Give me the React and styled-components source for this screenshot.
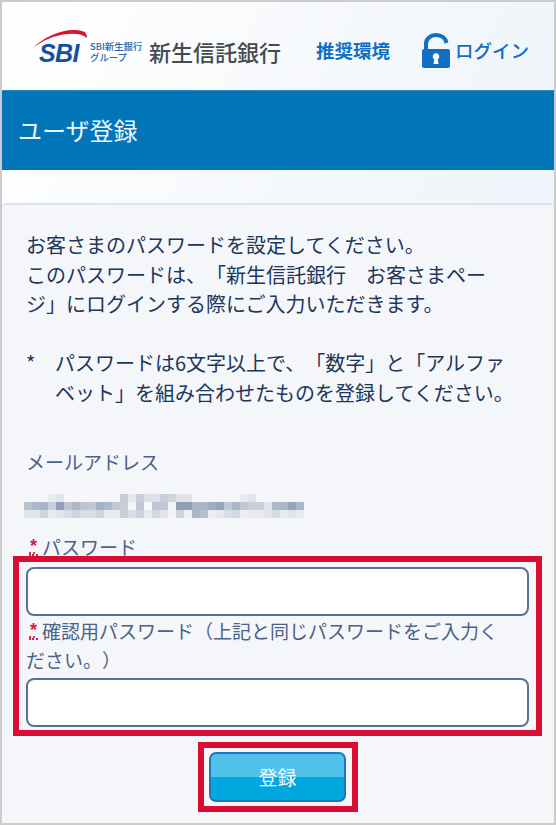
import React from 'react';
import styled, { createGlobalStyle } from 'styled-components';

const Global = createGlobalStyle`
  html, body { margin: 0; padding: 0; background: #fff; }
  * { box-sizing: border-box; }
`;

const CJK = `"Noto Sans CJK JP", "Noto Sans", sans-serif`;

const Frame = styled.div`
  position: relative;
  width: 556px;
  height: 825px;
  border: 2px solid #cccccc;
  background: linear-gradient(115deg, #ffffff 0%, #f4f7fb 45%, #eaf3fc 100%);
  font-family: ${CJK};
  text-spacing-trim: space-all;
  font-feature-settings: "palt" 0;
  overflow: hidden;
`;

const Header = styled.header`
  height: 88px;
  display: flex;
  align-items: center;
  padding: 8px 0 0 30px;
`;

const LogoMark = styled.svg`
  width: 56px;
  height: 36px;
  flex: none;
  margin: -5px 2px 0 0;
`;

const LogoSub = styled.div`
  display: flex;
  flex-direction: column;
  width: 59px;
  color: #2a66ad;
  font-size: 9.4px;
  line-height: 11px;
  margin: 4px 0 0 0;
  white-space: nowrap;
  font-weight: 500;
`;

const BankName = styled.div`
  font-size: 22px;
  line-height: 30px;
  color: #444a50;
  font-weight: 500;
  width: 167px;
  white-space: nowrap;
  margin-top: 1px;
`;

const NavLink = styled.a`
  color: #0f6fc2;
  font-size: 18.5px;
  font-weight: 700;
  line-height: 26px;
  white-space: nowrap;
`;

const LoginLink = styled.a`
  display: flex;
  align-items: center;
  gap: 5px;
  margin-left: 32px;
  color: #0f6fc2;
  font-size: 18.5px;
  font-weight: 500;
  line-height: 26px;
  white-space: nowrap;
`;

const LockIcon = styled.svg`
  width: 28px;
  height: 36px;
  flex: none;
  margin-top: 2px;
`;

const TitleBar = styled.div`
  height: 80px;
  background: #0075b8;
  border-top: 1px solid #2a8bc4;
  color: #eef6fb;
  font-size: 24px;
  line-height: 78px;
  padding-left: 16px;
`;

const Spacer = styled.div`
  height: 33px;
`;

const Card = styled.main`
  height: 620px;
  background: #f4f6fa;
  border-top: 2px solid #dde3ec;
  border-radius: 5px 5px 0 0;
  padding: 25px 25px 0 24px;
`;

const Para = styled.p`
  margin: 0;
  font-size: 20px;
  line-height: 29.5px;
  color: #20375a;
  white-space: nowrap;
`;

const Note = styled.div`
  display: flex;
  margin-top: 29px;
  font-size: 20px;
  line-height: 30.5px;
  color: #20375a;
  white-space: nowrap;
`;

const NoteMark = styled.span`
  width: 29px;
  flex: none;
`;

const Label = styled.label`
  display: block;
  font-size: 19px;
  line-height: 29px;
  height: ${p => p.$lines * 29}px;
  color: #4c6287;
  white-space: nowrap;
  margin-top: ${p => p.$mt || 0}px;
`;

const Req = styled.abbr`
  display: inline-block;
  width: 9px;
  height: 18px;
  line-height: 16px;
  margin: 0 4px 0 3px;
  color: #d7213f;
  font-family: "Liberation Sans", sans-serif;
  font-size: 18px;
  font-weight: 700;
  text-align: center;
  border-bottom: 2px dotted #d7213f;
  vertical-align: 3px;
`;

const Mosaic = styled.svg`
  display: block;
  width: 280px;
  height: 24px;
  margin: 18px 0 0 -2px;
`;

const Input = styled.input`
  display: block;
  width: 503px;
  height: 49px;
  border: 2px solid #5a7096;
  border-radius: 8px;
  background: #ffffff;
  margin: ${p => p.$mt || 0}px 0 0 0;
  outline: none;
`;

const Submit = styled.button`
  display: block;
  width: 137px;
  height: 50px;
  margin: 25px 0 0 183px;
  border: 2px solid #1c76c2;
  border-radius: 7px;
  background: linear-gradient(#50c2e9 0 50%, #00a8df 50% 100%);
  color: #f4fbfe;
  font-family: ${CJK};
  font-size: 19px;
  padding: 0;
`;

const Highlight = styled.div`
  position: absolute;
  left: ${p => p.$x}px;
  top: ${p => p.$y}px;
  width: ${p => p.$w}px;
  height: ${p => p.$h}px;
  border: 6px solid #d80c35;
  pointer-events: none;
`;

const rows = [
  {3:'e8ebf0',4:'e2e6ec',12:'c7ced9',13:'e5e8ee',14:'c9d0db',15:'dce0e8',16:'dce0e8',17:'c9d0db',18:'d0d5df',19:'e0e3ea',20:'e0e3ea',27:'e8ebf0',28:'dfe3ea'},
  ['b8c3d1','adb9ca','a9b5c6','c8cfda','929fb6','bcc6d3','aeb8c9','bcc5d2','c0c8d5','a6b2c6','aebaca','c3cad6','c7ced9','f3f5f9','c0c8d5','f7f8fb','bdc6d4','c0c8d5','f2f3f7','8f9db5','929fb6','a9b5c6','a9b5c6','a0adc0','97a5ba','c0c8d5','a9b6c7','c0c8d5','c8cfda','c8cfda','e0e3ea','acb7c8','acb7c8','96a3b9','aab6c7'],
  ['dfe3ea','e2e5ec','cfd5df','e6e9ef','e0e3ea','d8dce5','cfd5df','d8dce5','d8dce5','cfd5df','e8eaef','e8eaef','c8cfda','dadfe7','ccd2dd','e6e9ef','d3d8e2','e2e5ec','f2f3f7','ced4de','eff1f5','aab6c8','b5bfce','eceef3','e6e8ee','d8dce5','d2d7e1','eceef3','e8eaf0','e8eaf0','e0e3ea','d5dae3','e8eaf0','dfe3ea','e8eaf0'],
];

export default function App() {
  return (
    <>
      <Global />
      <Frame>
        <Header>
          <LogoMark viewBox="0 0 56 36">
            <path d="M0 19 C12 6 34 -3 50 1 C54 2 55 5 55 8 C51 4 44 3 36 4 C22 5 9 11 0 19 Z" fill="#d8112f" />
            <text x="7" y="32" fontFamily="Liberation Sans" fontSize="25" fontWeight="700" fontStyle="italic" fill="#14519f" letterSpacing="-0.6">SBI</text>
          </LogoMark>
          <LogoSub>
            <span>SBI新生銀行</span>
            <span>グループ</span>
          </LogoSub>
          <BankName>新生信託銀行</BankName>
          <NavLink>推奨環境</NavLink>
          <LoginLink>
            <LockIcon viewBox="0 0 28 36">
              <path d="M4 17 V11 C4 5.5 8.5 2 14 2 C19.5 2 23.5 5 24.5 10" fill="none" stroke="#0f6fc2" strokeWidth="4" />
              <path fillRule="evenodd" d="M2 16 H26 a2 2 0 0 1 2 2 V33 a2 2 0 0 1 -2 2 H2 a2 2 0 0 1 -2 -2 V18 a2 2 0 0 1 2 -2 Z M14 20 a3.4 3.4 0 0 0 -1.8 6.2 L11.5 31 H16.5 L15.8 26.2 A3.4 3.4 0 0 0 14 20 Z" fill="#0f6fc2" />
            </LockIcon>
            <span>ログイン</span>
          </LoginLink>
        </Header>
        <TitleBar>ユーザ登録</TitleBar>
        <Spacer />
        <Card>
          <Para>
            お客さまのパスワードを設定してください。<br />
            このパスワードは、「新生信託銀行　お客さまペー<br />
            ジ」にログインする際にご入力いただきます。
          </Para>
          <Note>
            <NoteMark>*</NoteMark>
            <div>
              パスワードは6文字以上で、「数字」と「アルファ<br />
              ベット」を組み合わせたものを登録してください。
            </div>
          </Note>
          <Label $lines={1} $mt={38}>メールアドレス</Label>
          <Mosaic viewBox="0 0 280 24" shapeRendering="crispEdges">
            {rows.map((row, y) =>
              Object.entries(row).map(([i, c]) => (
                <rect key={`${y}-${i}`} x={i * 8} y={y * 8} width="8" height="8" fill={`#${c}`} />
              ))
            )}
          </Mosaic>
          <Label $lines={1} $mt={14}><Req title="required">*</Req>パスワード</Label>
          <Input type="password" $mt={6} />
          <Label $lines={2} $mt={0}>
            <Req title="required">*</Req>確認用パスワード（上記と同じパスワードをご入力く<br />ださい。）
          </Label>
          <Input type="password" $mt={4} />
          <Submit type="button">登録</Submit>
        </Card>
        <Highlight $x={11} $y={554} $w={529} $h={180} />
        <Highlight $x={196} $y={740} $w={160} $h={70} />
      </Frame>
    </>
  );
}
